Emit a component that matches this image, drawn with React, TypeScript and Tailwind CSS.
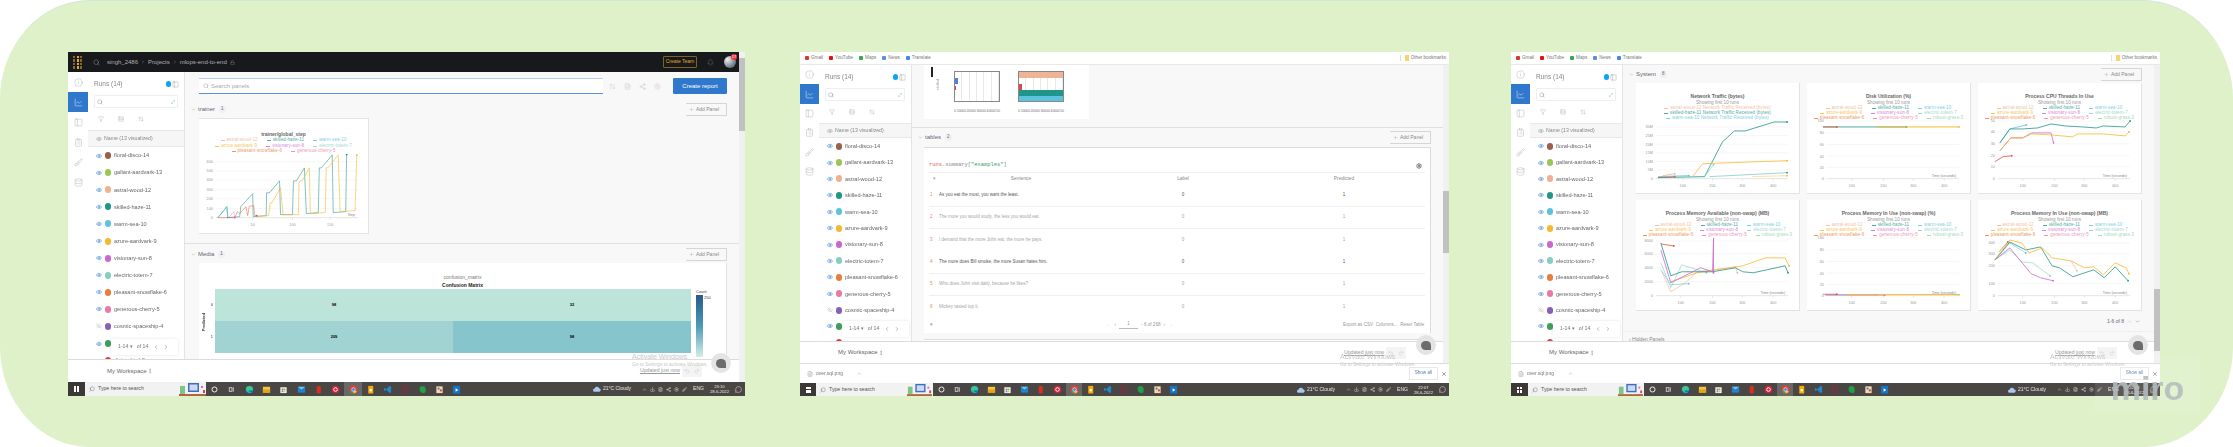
import {
  ArrowUpDown,
  Bell,
  Brush,
  ChevronDown,
  ChevronLeft,
  ChevronRight,
  ChevronUp,
  ClipboardList,
  Database,
  Download,
  Eye,
  EyeOff,
  FileText,
  Filter,
  Info,
  LineChart,
  Lock,
  Maximize2,
  MessageCircle,
  MoreVertical,
  PanelLeft,
  Plus,
  Redo2,
  Rows3,
  Search,
  Settings,
  Share2,
  Undo2,
  X,
} from "lucide-react";
import type { ReactNode } from "react";

const runs = [
  { name: "floral-disco-14", color: "#9c5f4a" },
  { name: "gallant-aardvark-13", color: "#9bc653" },
  { name: "astral-wood-12", color: "#f0b092" },
  { name: "skilled-haze-11", color: "#20958a" },
  { name: "warm-sea-10", color: "#5bc4dc" },
  { name: "azure-aardvark-9", color: "#f5b82e" },
  { name: "visionary-sun-8", color: "#cc66cc" },
  { name: "electric-totem-7", color: "#86cfc0" },
  { name: "pleasant-snowflake-6", color: "#e87d3e" },
  { name: "generous-cherry-5", color: "#ec79a4" },
  { name: "cosmic-spaceship-4", color: "#8560b8", hidden: true },
  { name: "robust-grass-3", color: "#3f9e5f" },
  { name: "divine-bird-2", color: "#d94040" },
];

const TEAL = "#20958a";
const YEL = "#f5b82e";
const PUR = "#cc66cc";
const MINT = "#86cfc0";
const BLUE = "#5bc4dc";
const PEACH = "#f0b092";
const RED = "#e0503c";

type Legend = [string, string][][];
type Series = { c: string; p: string; w?: number; o?: number };
type Tick = [number, string];

const runLegend: Legend = [
  [["astral-wood-12", PEACH], ["skilled-haze-11", TEAL], ["warm-sea-10", BLUE]],
  [["azure-aardvark-9", YEL], ["visionary-sun-8", PUR], ["electric-totem-7", MINT]],
  [["pleasant-snowflake-6", "#e87d3e"], ["generous-cherry-5", "#ec79a4"], ["robust-grass-3", "#8fcfa5"]],
];

const pctY: Tick[] = [[2, "100"], [14, "80"], [25.7, "60"], [37.3, "40"], [48.7, "20"], [60, "0"]];
const timeX: Tick[] = [[45, "100"], [77, "200"], [107, "300"], [138, "400"]];

const Plot = ({
  yTicks,
  xTicks,
  series,
  note,
  height = 75,
  width = 164,
  left = 20,
  right = 153,
}: {
  yTicks: Tick[];
  xTicks: Tick[];
  series: Series[];
  note?: string;
  height?: number;
  width?: number;
  left?: number;
  right?: number;
}) => {
  const base = yTicks[yTicks.length - 1][0];
  return (
    <svg viewBox={`0 0 ${width} ${height}`} className="block w-full">
      {yTicks.map(([y, label]) => (
        <g key={label}>
          <line x1={left} x2={right} y1={y} y2={y} stroke="#f0f0f0" strokeWidth="0.6" />
          <text x={left - 3} y={y + 1.5} fontSize="3.8" fill="#999" textAnchor="end">
            {label}
          </text>
        </g>
      ))}
      {xTicks.map(([x, label]) => (
        <g key={label}>
          <line x1={x} x2={x} y1={base} y2={base + 2} stroke="#ccc" strokeWidth="0.5" />
          <text x={x} y={base + 8} fontSize="3.8" fill="#999" textAnchor="middle">
            {label}
          </text>
        </g>
      ))}
      <line x1={left} x2={right} y1={base} y2={base} stroke="#d8d8d8" strokeWidth="0.5" />
      {series.map((s, i) => {
        const pts = s.p.split(" ");
        const [lx, ly] = pts[pts.length - 1].split(",");
        return (
          <g key={i}>
            <polyline points={s.p} fill="none" stroke={s.c} strokeWidth={s.w ?? 0.8} opacity={s.o ?? 1} />
            <circle cx={lx} cy={ly} r="0.9" fill={s.c} />
          </g>
        );
      })}
      {note && (
        <text x={right - 3} y={base - 2} fontSize="3.6" fill="#888" textAnchor="end">
          {note}
        </text>
      )}
    </svg>
  );
};

const ChartCard = ({
  title,
  sub,
  legend,
  children,
  className = "h-[111px] pt-[10px]",
  legendBox = "h-[13px]",
  rowBox = "h-[5px]",
}: {
  title: string;
  sub?: string;
  legend: Legend;
  children: ReactNode;
  className?: string;
  legendBox?: string;
  rowBox?: string;
}) => (
  <div className={`bg-white border-b border-r border-[#e3e3e3] overflow-hidden flex flex-col items-center ${className}`}>
    <div className="text-[5px] leading-[6px] font-bold text-[#666] whitespace-nowrap">{title}</div>
    {sub && <div className="text-[4.6px] leading-[7px] text-[#999] whitespace-nowrap">{sub}</div>}
    <div className={`flex flex-col items-center shrink-0 opacity-80 ${legendBox}`}>
      {legend.map((row, i) => (
        <div key={i} className={`flex gap-[9px] items-center shrink-0 ${rowBox}`}>
          {row.map(([name, color]) => (
            <span key={name} className="flex items-center gap-[2px] text-[4.5px] tracking-[0.1px] whitespace-nowrap" style={{ color }}>
              <span className="w-[4px] h-[1px]" style={{ background: color }} />
              {name}
            </span>
          ))}
        </div>
      ))}
    </div>
    <div className="w-full">{children}</div>
  </div>
);

const RunsSidebar = ({ width, rowH, nameH }: { width: string; rowH: string; nameH: string }) => (
  <div className={`relative shrink-0 bg-white border-r border-[#e4e4e4] overflow-hidden ${width}`}>
    <div className="flex items-center justify-between h-[23px] pl-[6px] pr-[5px] pt-[1px] text-[6.5px] text-[#888]">
      <span>Runs (14)</span>
      <span className="flex items-center gap-[1px]">
        <span className="w-[5px] h-[6px] rounded-full bg-[#0aa5f5]" />
        <PanelLeft className="w-[7px] h-[7px] text-[#888]" strokeWidth={1.2} />
      </span>
    </div>
    <div className="flex items-center justify-between h-[13px] mx-[6px] border border-[#eee] rounded-[1px] px-[2px]">
      <Search className="w-[6px] h-[6px] text-[#777]" strokeWidth={1.5} />
      <Maximize2 className="w-[4px] h-[4px] text-[#2aa5c8]" strokeWidth={1.5} />
    </div>
    <div className="flex items-center gap-[14px] h-[22px] pl-[10px] text-[#999]">
      <Filter className="w-[6px] h-[6px]" strokeWidth={1.3} />
      <Rows3 className="w-[6px] h-[6px]" strokeWidth={1.3} />
      <ArrowUpDown className="w-[6px] h-[6px]" strokeWidth={1.3} />
    </div>
    <div className={`flex items-center gap-[2px] pl-[8px] bg-[#f6f6f6] border-y border-[#e8e8e8] text-[5.2px] text-[#888] whitespace-nowrap ${nameH}`}>
      <Eye className="w-[6px] h-[6px] text-[#777]" strokeWidth={1.4} />
      Name (13 visualized)
    </div>
    {runs.map((r) => (
      <div key={r.name} className={`flex items-center pl-[8px] text-[5.6px] text-[#666] whitespace-nowrap ${rowH}`}>
        {r.hidden ? (
          <EyeOff className="w-[6px] h-[6px] text-[#aaa] shrink-0" strokeWidth={1.4} />
        ) : (
          <Eye className="w-[6px] h-[6px] text-[#2f78cc] shrink-0" strokeWidth={2} />
        )}
        <span className="w-[6px] h-[7px] rounded-full ml-[3px] mr-[3px] shrink-0" style={{ background: r.color }} />
        {r.name}
      </div>
    ))}
    <div className="absolute left-[23px] bottom-[4px] flex items-center gap-[4px] h-[16px] w-[67px] pl-[7px] bg-white rounded-[2px] shadow-[0_0_3px_rgba(0,0,0,0.12)] text-[5.2px] text-[#777]">
      <span>1-14 ▾</span>
      <span>of 14</span>
      <ChevronLeft className="w-[6px] h-[6px] ml-[1px]" />
      <ChevronRight className="w-[6px] h-[6px]" />
    </div>
  </div>
);

const NavRail = ({ width, item }: { width: string; item: string }) => {
  const icons = [Info, LineChart, PanelLeft, ClipboardList, Brush, Database];
  return (
    <div className={`shrink-0 bg-white flex flex-col ${width}`}>
      {icons.map((Icon, i) => (
        <div key={i} className={`flex items-center justify-center ${item} ${i === 1 ? "bg-[#2f78cc] text-white" : "text-[#b0b0b0]"}`}>
          <Icon className="w-[9px] h-[9px]" strokeWidth={1.2} />
        </div>
      ))}
    </div>
  );
};

const SectionHead = ({ title, count, className = "" }: { title: string; count: number; className?: string }) => (
  <div className={`flex items-center justify-between h-[13px] pl-[6px] ${className}`}>
    <div className="flex items-center gap-[2px] text-[6px] text-[#667]">
      <ChevronDown className="w-[5px] h-[5px] text-[#999]" />
      {title}
      <span className="ml-[2px] px-[2px] rounded-[3px] bg-[#eef0f2] text-[4.5px] text-[#667]">{count}</span>
    </div>
    <div className="flex items-center gap-[2px] h-full w-[41px] pl-[3px] border border-l-0 border-[#d5d5d5] rounded-[1px] text-[5px] text-[#888]">
      <Plus className="w-[5px] h-[5px] text-[#888]" strokeWidth={1.2} />
      Add Panel
    </div>
  </div>
);

const TaskIcon = ({ kind }: { kind: number }) => {
  const shapes = [
    <circle key="c" cx="5" cy="5" r="2.8" fill="none" stroke="#fff" strokeWidth="1" />,
    <g key="t" fill="none" stroke="#ddd" strokeWidth="0.9">
      <rect x="2.5" y="3" width="3" height="4" />
      <path d="M7 2.5v5" />
    </g>,
    <g key="e">
      <circle cx="5" cy="5" r="4.3" fill="#1572c4" />
      <path d="M1 5a4 4 0 0 1 8 0c0 1-1 1-2 1H4c0 1.5 2 2.5 4 1.5A4.3 4.3 0 0 1 1 5z" fill="#3cc98a" />
    </g>,
    <g key="f">
      <rect x="1" y="2" width="8" height="6.5" fill="#f5c542" />
      <rect x="1" y="5" width="8" height="3.5" fill="#e3a21a" />
    </g>,
    <g key="s">
      <rect x="1.5" y="2.5" width="7" height="6.5" fill="#f4f4f4" />
      <rect x="3" y="4" width="1.8" height="1.8" fill="#e8563a" />
      <rect x="5.2" y="4" width="1.8" height="1.8" fill="#6cb83a" />
      <rect x="3" y="6.2" width="1.8" height="1.8" fill="#2f9be8" />
      <rect x="5.2" y="6.2" width="1.8" height="1.8" fill="#f5c542" />
    </g>,
    <g key="m">
      <rect x="1" y="2" width="8" height="6.5" fill="#1a86d0" />
      <path d="M1 2l4 3 4-3" fill="#7cc4f0" />
    </g>,
    <rect key="o" x="3" y="1" width="4.5" height="8.5" rx="1.5" fill="#d8321e" />,
    <g key="r">
      <circle cx="5" cy="5" r="4.2" fill="#d8233a" />
      <circle cx="5" cy="5" r="2" fill="none" stroke="#fff" strokeWidth="1" />
    </g>,
    <g key="ch">
      <circle cx="5" cy="5" r="4.4" fill="#e34133" />
      <path d="M5 5L1.2 7.2A4.4 4.4 0 0 0 5 9.4z" fill="#3aa757" />
      <path d="M5 5l3.8 2.2A4.4 4.4 0 0 1 5 9.4z" fill="#fbc02d" />
      <circle cx="5" cy="5" r="2" fill="#4285f4" stroke="#fff" strokeWidth="0.6" />
    </g>,
    <g key="y">
      <rect x="2.5" y="1" width="5.5" height="8.5" fill="#f9ab00" />
      <rect x="4" y="4.5" width="2.5" height="2.5" fill="#fff" />
    </g>,
    <path key="v" d="M7.5 1L3.5 4.8 1.5 3.3 1 3.7v2.6l.5.4 2-1.5 4 3.8 1.5-.7V1.7z" fill="#1f8ad2" />,
    <rect key="op" x="2.5" y="1" width="5" height="8.5" rx="2.5" fill="none" stroke="#b01e3a" strokeWidth="1" />,
    <path key="ev" d="M3 1.5h4l1.5 2.5v3C8.5 9 6 9.5 4.5 8.5 2 8 1.5 5 2 3z" fill="#1fa14a" />,
    <g key="p">
      <rect x="1.5" y="1.5" width="7" height="7.5" fill="#f1d9b0" />
      <circle cx="4" cy="4" r="1.2" fill="#3b82d6" />
      <circle cx="6.5" cy="6" r="1.2" fill="#d6483b" />
    </g>,
    <g key="b">
      <rect x="1" y="1" width="8" height="8.5" fill="#1476c8" />
      <path d="M4 3.5l3 2-3 2z" fill="#fff" />
    </g>,
  ];
  return (
    <svg viewBox="0 0 10 10" className="w-[9px] h-[9px]">
      {shapes[kind]}
    </svg>
  );
};

const Taskbar = ({
  start,
  searchW,
  cell,
  time,
  date,
}: {
  start: string;
  searchW: string;
  cell: string;
  time: string;
  date: string;
}) => (
  <div className="flex items-center h-full bg-[#4a4643]">
    <div className={`h-full flex items-center justify-center bg-[#3b3836] ${start}`}>
      <div className="grid grid-cols-2 gap-[0.6px] w-[5px] h-[6px]">
        <span className="bg-white" />
        <span className="bg-white" />
        <span className="bg-white" />
        <span className="bg-white" />
      </div>
    </div>
    <div className={`h-full flex items-center gap-[3px] pl-[4px] bg-[#f2f2f2] text-[5.2px] text-[#555] whitespace-nowrap ${searchW}`}>
      <Search className="w-[6px] h-[6px] -scale-x-100" strokeWidth={1.5} />
      Type here to search
    </div>
    <svg viewBox="0 0 27 14" className="w-[27px] h-full shrink-0 bg-[#f2f2f2]">
      <rect x="0" y="12" width="27" height="2" fill="#b5653a" />
      <rect x="1" y="4" width="5" height="8" fill="#7cc48a" />
      <rect x="9" y="1" width="11" height="9" fill="#3a6fc4" />
      <rect x="10.5" y="2.5" width="8" height="6" fill="#cfd8ef" />
      <rect x="22" y="4" width="2" height="2" fill="#e06aa8" />
      <rect x="24" y="8" width="2" height="3" fill="#d04060" />
    </svg>
    {Array.from({ length: 15 }, (_, i) => (
      <div key={i} className={`h-full flex items-center justify-center shrink-0 ${cell} ${i === 8 ? "bg-[#6b6764]" : ""}`}>
        <TaskIcon kind={i} />
      </div>
    ))}
    <div className="flex-1" />
    <div className="flex items-center h-full text-[5px] text-[#e8e8e8] whitespace-nowrap">
      <svg viewBox="0 0 10 7" className="w-[8px] h-[6px] mr-[2px]">
        <path d="M2 7a2 2 0 0 1 0-4 3 3 0 0 1 5.6-.5A2.3 2.3 0 0 1 8 7z" fill="#a8c8ec" />
      </svg>
      <span className="mr-[11px]">21°C Cloudy</span>
      <ChevronUp className="w-[5px] h-[5px] mr-[3px]" />
      <span className="flex items-center gap-[3px] mr-[6px] text-[#ddd]">
        <Download className="w-[5px] h-[5px]" />
        <FileText className="w-[5px] h-[5px]" />
        <Share2 className="w-[5px] h-[5px]" />
        <Settings className="w-[5px] h-[5px]" />
        <Brush className="w-[5px] h-[5px]" />
      </span>
      <span className="mr-[6px]">ENG</span>
      <span className="flex flex-col items-center mr-[6px] text-[4.2px] leading-[5px]">
        <span>{time}</span>
        <span>{date}</span>
      </span>
      <MessageCircle className="w-[7px] h-[7px] mr-[3px] text-white" strokeWidth={1.5} />
    </div>
  </div>
);

const BookmarkBar = () => {
  const items: [string, string][] = [
    ["Gmail", "#d8392b"],
    ["YouTube", "#e60f0f"],
    ["Maps", "#34a853"],
    ["News", "#5b8fe0"],
    ["Translate", "#4285f4"],
  ];
  return (
    <div className="flex items-center h-[13px] pl-[5px] pr-[3px] bg-white border-b border-[#e8e8e8] text-[4.6px] text-[#777] whitespace-nowrap">
      {items.map(([name, color]) => (
        <span key={name} className="flex items-center gap-[2px] mr-[6px]">
          <span className="w-[4px] h-[4px] rounded-[1px]" style={{ background: color }} />
          {name}
        </span>
      ))}
      <span className="flex-1" />
      <span className="flex items-center gap-[2px] border-l border-[#ddd] pl-[4px]">
        <span className="w-[4px] h-[6px] bg-[#f7d56a]" />
        Other bookmarks
      </span>
    </div>
  );
};

const DownloadBar = () => (
  <div className="flex items-center h-[20px] pl-[7px] pr-[2px] bg-white border-t border-[#ddd] text-[5px] text-[#777]">
    <FileText className="w-[6px] h-[6px] text-[#888] mr-[3px]" strokeWidth={1.5} />
    over.sql.png
    <ChevronUp className="w-[5px] h-[5px] ml-[14px] text-[#888]" />
    <span className="flex-1" />
    <span className="border border-[#e8e8e8] px-[5px] py-[2px] text-[4.6px] text-[#5b7fb8]">Show all</span>
    <X className="w-[6px] h-[6px] ml-[3px] text-[#444]" />
  </div>
);

const WorkspaceBar = ({ height, offset }: { height: string; offset: string }) => (
  <div className={`shrink-0 flex items-center bg-white border-t border-[#dcdcdc] text-[#666] ${height} ${offset}`}>
    <span className="text-[6px]">My Workspace</span>
    <MoreVertical className="w-[6px] h-[6px]" strokeWidth={1.5} />
    <span className="flex-1" />
    <span className="text-[5.2px] text-[#999] underline">Updated just now</span>
    <span className="flex items-center gap-[4px] ml-[2px] mr-[37px] h-[12px] px-[2px] bg-[#f4f4f4] text-[#bbb]">
      <Undo2 className="w-[6px] h-[6px]" strokeWidth={1.3} />
      <Redo2 className="w-[6px] h-[6px]" strokeWidth={1.3} />
    </span>
  </div>
);

const Chat = ({ className }: { className: string }) => (
  <div className={`absolute w-[20px] h-[20px] rounded-full bg-[#e4e4e4] flex items-center justify-center ${className}`}>
    <span className="w-[10px] h-[9px] rounded-[5px] rounded-br-none bg-[#6c6c6c]" />
  </div>
);

const Activate = ({ className }: { className: string }) => (
  <div className={`absolute text-[#c8c8c8] whitespace-nowrap ${className}`}>
    <div className="text-[7px] leading-[7px]">Activate Windows</div>
    <div className="text-[4.8px] leading-[9px]">Go to Settings to activate Windows.</div>
  </div>
);

const Scrollbar = ({ thumb }: { thumb: string }) => (
  <div className="shrink-0 w-[6px] bg-[#f1f1f1]">
    <div className={thumb} />
  </div>
);

/* --------- panel 1: trainer + media --------- */
const sawTeal =
  "19,64 28,53 29,64 41,63 42,53 54,40 54.5,63 67.6,62 68,39 71,39 81,27 82,61 94,61 95,27 98,27 106,14 108,60 120,59 121,14 123,14 134,1 135,59 147.6,58 148.5,0.5";
const sawYel =
  "58,62.7 70,62 71.5,49 73.4,49 82,34 84.6,61 100,61 100.6,28 104,26.5 111,14 112,60 127,59 128,14 130.6,13 140,1 142,58 157,57 158.7,1";
const sawRed = "19,64 36,64 38.5,58 41,60 47,53 49,62 50.6,52.6 55,52 56,62 58,62";

const Panel1 = () => (
  <div className="relative w-[677px] h-[344px] shrink-0 flex flex-col blur-[0.4px]">
    <div className="flex h-[330px]">
      <div className="flex-1 min-w-0 flex flex-col">
        <div className="flex items-center h-[20px] shrink-0 bg-[#18191d] text-[6px] text-[#b0b0b0] pl-[5px] pr-[3px]">
          <div className="grid grid-cols-3 gap-x-[1.5px] gap-y-[1px] w-[9px] h-[13px] mr-[11px]">
            {Array.from({ length: 12 }, (_, i) => (
              <span key={i} className={i % 3 === 1 ? "bg-[#e0a82e]" : "bg-[#8a6a20]"} />
            ))}
          </div>
          <Search className="w-[7px] h-[7px] mr-[7px]" strokeWidth={1.3} />
          <span>singh_2486</span>
          <ChevronRight className="w-[4px] h-[4px] mx-[3px]" />
          <span>Projects</span>
          <ChevronRight className="w-[4px] h-[4px] mx-[3px]" />
          <span>mlops-end-to-end</span>
          <Lock className="w-[5px] h-[5px] ml-[3px]" strokeWidth={1.3} />
          <span className="flex-1" />
          <span className="flex items-center justify-center w-[34px] h-[12px] border border-[#7a6420] rounded-[1px] text-[5px] text-[#e0a82e] mr-[10px]">
            Create Team
          </span>
          <Bell className="w-[7px] h-[7px] text-[#888] mr-[10px]" strokeWidth={1.2} />
          <span className="relative w-[12px] h-[12px] rounded-full bg-[radial-gradient(circle_at_30%_30%,#f0f0f0,#345)]">
            <span className="absolute -top-[2px] -right-[1px] w-[6px] h-[6px] rounded-full bg-[#f03040] text-[4px] leading-[6px] text-center text-white">
              17
            </span>
          </span>
        </div>
        <div className="flex flex-1 min-h-0">
          <NavRail width="w-[20px]" item="h-[20px]" />
          <RunsSidebar width="w-[97px]" rowH="h-[17.1px]" nameH="h-[17px]" />
          <div className="flex-1 min-w-0 bg-[#f8f8f8] overflow-hidden">
            <div className="flex items-center h-[16px] mt-[6px] ml-[14px] mr-[12px]">
              <div className="flex items-center gap-[2px] w-[404px] h-full pl-[4px] bg-white border-t border-b border-t-[#b9cfe8] border-b-[#5a93d8] text-[6px] text-[#aaa]">
                <Search className="w-[6px] h-[6px] text-[#888]" strokeWidth={1.5} />
                Search panels
              </div>
              <div className="flex items-center gap-[8px] ml-[6px] text-[#bbb]">
                <ArrowUpDown className="w-[7px] h-[7px]" strokeWidth={1.2} />
                <FileText className="w-[7px] h-[7px]" strokeWidth={1.2} />
                <Share2 className="w-[7px] h-[7px]" strokeWidth={1.2} />
                <Settings className="w-[7px] h-[7px]" strokeWidth={1.2} />
              </div>
              <span className="flex-1" />
              <div className="flex items-center justify-center w-[54px] h-full rounded-[1px] bg-[#2f78cc] text-[6px] text-white">
                Create report
              </div>
            </div>
            <SectionHead title="trainer" count={1} className="mt-[9px] mr-[12px]" />
            <div className="ml-[14px] mt-[2px] w-[170px]">
              <ChartCard
                title="trainer/global_step"
                legend={runLegend.slice(0, 2).concat([runLegend[2].slice(0, 2)])}
                className="h-[116px] border-t border-[#e3e3e3] pt-[12px]"
                legendBox="h-[17px] pt-[1px]"
                rowBox="h-[5.5px]"
              >
                <Plot
                  height={78}
                  width={170}
                  left={17}
                  right={160}
                  yTicks={[[7.7, "600"], [17, "500"], [26, "400"], [36, "300"], [45, "200"], [55, "100"], [64, "0"]]}
                  xTicks={[[54, "50"], [94, "100"], [132, "150"]]}
                  note="Step"
                  series={[
                    { c: TEAL, p: sawTeal, w: 0.7, o: 0.8 },
                    { c: YEL, p: sawYel, w: 0.7, o: 0.85 },
                    { c: BLUE, p: "19,64 28,53 29,64", w: 0.7 },
                    { c: RED, p: sawRed, w: 0.6, o: 0.8 },
                    { c: PUR, p: "30,64 35,58 36,64", w: 0.5, o: 0.7 },
                  ]}
                />
              </ChartCard>
            </div>
            <div className="h-[10px] border-b border-[#e0e0e0]" />
            <SectionHead title="Media" count={1} className="mt-[4px] mr-[12px]" />
            <div className="ml-[14px] mr-[12px] mt-[2px] h-[120px] bg-white border-r border-[#e3e3e3] flex flex-col items-center pt-[10px]">
              <div className="text-[5px] leading-[8px] text-[#777]">confusion_matrix</div>
              <div className="text-[5px] leading-[8px] font-bold text-[#222]">Confusion Matrix</div>
              <div className="flex w-full">
                <div className="flex w-[16px] flex-col items-end justify-center h-[64px] relative text-[4px] text-[#333]">
                  <span className="absolute right-[8px] top-[24px] [writing-mode:vertical-rl] rotate-180 font-bold">Predicted</span>
                  <span className="absolute right-[2px] top-[13px]">0</span>
                  <span className="absolute right-[2px] top-[45px]">1</span>
                </div>
                <div className="grid grid-cols-2 grid-rows-2 w-[476px] h-[64px] text-[4px] font-bold text-black">
                  <div className="flex items-center justify-center bg-[#bde4d9]">98</div>
                  <div className="flex items-center justify-center bg-[#bde4d9]">32</div>
                  <div className="flex items-center justify-center bg-[#a0d3d2]">209</div>
                  <div className="flex items-center justify-center bg-[#86c5cc]">98</div>
                </div>
                <div className="ml-[5px] flex flex-col text-[4px] text-[#444]">
                  <span className="h-[6px] leading-[6px]">Count</span>
                  <div className="flex">
                    <div className="w-[7px] h-[62px] bg-gradient-to-b from-[#2b5a8c] via-[#4a9ab8] to-[#d3eee4]" />
                    <span className="ml-[1px]">250</span>
                  </div>
                </div>
              </div>
            </div>
          </div>
        </div>
        <WorkspaceBar height="h-[23px]" offset="pl-[39px]" />
      </div>
      <Scrollbar thumb="w-full h-[73px] mt-[6px] bg-[#c1c1c1]" />
    </div>
    <div className="h-[14px]">
      <Taskbar start="w-[17px] shrink-0" searchW="w-[94px] shrink-0" cell="w-[17.3px]" time="23:10" date="28-6-2022" />
    </div>
    <Activate className="left-[564px] top-[301px]" />
    <Chat className="left-[643px] top-[301px]" />
  </div>
);

/* --------- panel 2: tables --------- */
const tableRows = [
  { text: "As you eat the most, you want the least.", dark: true },
  { text: "The more you would study, the less you would eat.", line: true },
  { text: "I demand that the more John eat, the more he pays.", line: false },
  { text: "The more does Bill smoke, the more Susan hates him.", dark: true },
  { text: "Who does John visit daily, because he likes?", line: true },
  { text: "Mickey tasted top it.", line: false },
];

const MiniBars = ({ bands }: { bands: boolean }) => (
  <div className="relative w-[46px] h-[31px] border border-[#888] bg-white grid grid-cols-6 overflow-hidden">
    {Array.from({ length: 6 }, (_, i) => (
      <span key={i} className="border-r border-[#e8e8e8]" />
    ))}
    {bands ? (
      <>
        <span className="absolute left-0 right-0 top-0 h-[6px] bg-[#efb395]" />
        <span className="absolute left-0 w-[3px] top-[12px] h-[6px] bg-[#e04848]" />
        <span className="absolute left-0 right-0 top-[18px] h-[6px] bg-[#20958a]" />
        <span className="absolute left-0 right-0 top-[24px] h-[7px] bg-[#5bc4dc]" />
      </>
    ) : (
      <>
        <span className="absolute left-0 w-[3px] top-[6px] h-[6px] bg-[#4a80e0]" />
        <span className="absolute left-0 w-[1px] top-[14px] h-[4px] bg-[#e04848]" />
      </>
    )}
  </div>
);

const Panel2 = () => (
  <div className="relative w-[649px] h-[344px] shrink-0 ml-[55px] flex flex-col blur-[0.4px]">
    <BookmarkBar />
    <div className="flex h-[298px]">
      <div className="flex-1 min-w-0 flex flex-col">
        <div className="flex h-[276px]">
          <NavRail width="w-[19px]" item="h-[19.4px]" />
          <RunsSidebar width="w-[93px]" rowH="h-[16.4px]" nameH="h-[15px]" />
          <div className="flex-1 min-w-0 bg-[#f8f8f8] overflow-hidden">
            <div className="ml-[12px] w-[165px] h-[54px] bg-white flex pl-[30px] pt-[6px] gap-[18px] relative">
              <span className="absolute left-[7px] top-[2px] w-[2px] h-[10px] bg-[#222]" />
              <span className="absolute left-[11px] top-[14px] [writing-mode:vertical-rl] rotate-180 text-[4px] text-[#999]">skilled</span>
              <div className="flex flex-col">
                <MiniBars bands={false} />
                <span className="mt-[7px] text-[3.6px] text-[#777] tracking-tighter whitespace-nowrap">0 10000 20000 30000 40000 50</span>
              </div>
              <div className="flex flex-col">
                <MiniBars bands />
                <span className="mt-[7px] text-[3.6px] text-[#777] tracking-tighter whitespace-nowrap">0 10000 20000 30000 40000 50</span>
              </div>
            </div>
            <div className="h-[9px] border-b border-[#e0e0e0]" />
            <SectionHead title="tables" count={2} className="mt-[3px] mr-[12px]" />
            <div className="ml-[12px] mr-[12px] mt-[3px] h-[186px] bg-white border-t border-r border-[#dcdcdc] px-[5px] flex flex-col">
              <div className="flex items-center justify-between h-[25px] pt-[11px] border-b border-[#f0f0f0] pr-[3px]">
                <span className="[font-family:'Liberation_Mono',monospace] text-[5.4px] text-[#888]">
                  <span className="text-[#d0604a]">runs</span>.summary[<span className="text-[#2f9a5f]">"examples"</span>]
                </span>
                <Settings className="w-[6px] h-[6px] text-[#444]" strokeWidth={2.5} />
              </div>
              <div className="grid grid-cols-[10px_164px_160px_1fr] items-center h-[12px] text-[4.8px] text-[#888] text-center">
                <span className="text-[#aaa]">▾</span>
                <span>Sentence</span>
                <span>Label</span>
                <span>Predicted</span>
              </div>
              {tableRows.map((r, i) => (
                <div
                  key={i}
                  className={`grid grid-cols-[10px_164px_160px_1fr] items-center h-[22.2px] shrink-0 text-[4.5px] ${r.line || r.dark ? "border-b border-[#efefef]" : ""} ${r.dark ? "text-[#555]" : "text-[#a5a5a5]"}`}
                >
                  <span className="text-[#e08a70] pl-[1px]">{i + 1}</span>
                  <span className="whitespace-nowrap">{r.text}</span>
                  <span className="text-center">0</span>
                  <span className="text-center">1</span>
                </div>
              ))}
              <div className="flex items-center h-[14px] text-[4.6px] text-[#999]">
                <span className="w-[178px] pl-[1px]">▾</span>
                <span className="flex items-center gap-[3px] w-[236px]">
                  <span>←</span>
                  <span>‹</span>
                  <span className="w-[19px] border-b border-[#bbb] text-center">1</span>
                  <span>- 6 of 268</span>
                  <span>›</span>
                  <span>→</span>
                </span>
                <span className="whitespace-nowrap">Export as CSV&nbsp; Columns...&nbsp; Reset Table</span>
              </div>
            </div>
            <div className="ml-[12px] mr-[12px] mt-[6px] h-[10px] bg-white border-t border-[#dcdcdc]" />
          </div>
        </div>
        <WorkspaceBar height="h-[22px]" offset="pl-[38px]" />
      </div>
      <Scrollbar thumb="w-full h-[62px] mt-[126px] bg-[#c1c1c1]" />
    </div>
    <DownloadBar />
    <div className="h-[13px]">
      <Taskbar start="w-[16px] shrink-0" searchW="w-[90px] shrink-0" cell="w-[16.6px]" time="22:07" date="28-6-2022" />
    </div>
    <Activate className="left-[540px] top-[301px]" />
    <Chat className="left-[616px] top-[283px]" />
  </div>
);

/* --------- panel 3: system --------- */
const netLegend: Legend = [
  [["astral-wood-12 Network Traffic Received (bytes)", PEACH]],
  [["skilled-haze-11 Network Traffic Received (bytes)", TEAL]],
  [["warm-sea-10 Network Traffic Received (bytes)", BLUE]],
];

const charts: { title: string; sub: string; legend: Legend; plot: ReactNode }[] = [
  {
    title: "Network Traffic (bytes)",
    sub: "Showing first 10 runs",
    legend: netLegend,
    plot: (
      <Plot
        yTicks={[[8, "30M"], [16.7, "25M"], [25.3, "20M"], [34, "15M"], [42.7, "10M"], [51.3, "5M"], [60, "0"]]}
        xTicks={[[47, "100"], [77, "200"], [107, "300"], [138, "400"]]}
        series={[
          { c: TEAL, p: "22,59 69,58 87,23 99,12 110,12 139,3 152,3" },
          { c: YEL, p: "57,58 67,45 121,43 152,42" },
          { c: BLUE, p: "22,58 53,57" },
          { c: PEACH, p: "27,57 39,55" },
          { c: TEAL, p: "74,58 152,54", w: 0.6, o: 0.7 },
          { c: YEL, p: "117,58 152,57", w: 0.6, o: 0.7 },
          { c: MINT, p: "69,58 78,46", w: 0.6 },
          { c: RED, p: "22,59 39,58", w: 0.6 },
        ]}
      />
    ),
  },
  {
    title: "Disk Utilization (%)",
    sub: "Showing first 10 runs",
    legend: runLegend,
    plot: (
      <Plot
        yTicks={pctY}
        xTicks={timeX}
        note="Time (seconds)"
        series={[
          { c: TEAL, p: "16,8 100,8" },
          { c: YEL, p: "70,8 153,8", w: 1 },
          { c: RED, p: "16,8 30,8" },
        ]}
      />
    ),
  },
  {
    title: "Process CPU Threads In Use",
    sub: "Showing first 10 runs",
    legend: runLegend,
    plot: (
      <Plot
        yTicks={[[2, "50"], [13, "40"], [25, "30"], [37, "20"], [48, "10"], [60, "0"]]}
        xTicks={timeX}
        note="Time (seconds)"
        series={[
          { c: BLUE, p: "22,24 32,10 48.6,6" },
          { c: TEAL, p: "22,24 32,10 45,10 60,9 73.5,5 88,7 105,8 119,9 126,7 148,8 153,2" },
          { c: PUR, p: "22,32 33,19 45,19 54,14 73.5,14 76,24" },
          { c: YEL, p: "22,32 33,19 45,19 54,15 73.5,16 95,18 100,15 126,15 148,17 152,13" },
          { c: RED, p: "17,43 25,38 34,37" },
        ]}
      />
    ),
  },
  {
    title: "Process Memory Available (non-swap) (MB)",
    sub: "Showing first 10 runs",
    legend: runLegend,
    plot: (
      <Plot
        yTicks={[[5, "8000"], [18, "6000"], [32, "4000"], [46, "2000"], [60, "0"]]}
        xTicks={timeX}
        note="Time (seconds)"
        series={[
          { c: PEACH, p: "26,36 35,56 50,47 61.5,36 100,31 102,37", w: 0.6 },
          { c: MINT, p: "25,27 35,52 46,29 71,37", w: 0.6 },
          { c: BLUE, p: "25,34 35,49 53,48", w: 0.6 },
          { c: YEL, p: "35,46 61.5,37 107.5,30 130,22 150,22 154,30" },
          { c: TEAL, p: "25,7 35,40 46,36 77,36 100,32 107.5,36 118,37 150,30 153,37" },
          { c: PUR, p: "25,14 35,47 65,32 77,36 78,2 78,37" },
          { c: RED, p: "25,8 38,10" },
        ]}
      />
    ),
  },
  {
    title: "Process Memory In Use (non-swap) (%)",
    sub: "Showing first 10 runs",
    legend: runLegend,
    plot: (
      <Plot
        yTicks={pctY}
        xTicks={timeX}
        note="Time (seconds)"
        series={[
          { c: MINT, p: "18,59 70,59", w: 1 },
          { c: PUR, p: "18,59.5 78,59.5", w: 0.6 },
          { c: YEL, p: "40,59 153,59", w: 1 },
          { c: RED, p: "16,58.5 30,58.5", w: 0.6 },
        ]}
      />
    ),
  },
  {
    title: "Process Memory In Use (non-swap) (MB)",
    sub: "Showing first 10 runs",
    legend: runLegend,
    plot: (
      <Plot
        yTicks={[[7, "400"], [18, "300"], [30, "200"], [48, "100"], [60, "0"]]}
        xTicks={timeX}
        note="Time (seconds)"
        series={[
          { c: MINT, p: "17,24 32,14 44,26 55,27 72.5,40", w: 0.6 },
          { c: BLUE, p: "17,24 32,7 48,17", w: 0.6 },
          { c: PUR, p: "17,24 32,12 53.5,38 63,42 75.5,45" },
          { c: TEAL, p: "17,24 32,6 48,14 63,11 74.5,30 82,32 95.5,41 116.5,34 127,42 138,31 151,45" },
          { c: YEL, p: "17,24 32,4 44,7 51.5,17 65,12 74.5,22 93.5,25 107,32 116.5,31 126,39 138,27 149,32 152,38" },
          { c: PEACH, p: "93.5,25 99.5,35", w: 0.6 },
          { c: RED, p: "21,16 30,6", w: 0.6 },
        ]}
      />
    ),
  },
];

const Panel3 = () => (
  <div className="relative w-[649px] h-[344px] shrink-0 ml-[62px] flex flex-col blur-[0.4px]">
    <BookmarkBar />
    <div className="flex h-[298px]">
      <div className="flex-1 min-w-0 flex flex-col">
        <div className="flex h-[276px]">
          <NavRail width="w-[19px]" item="h-[19.4px]" />
          <RunsSidebar width="w-[93px]" rowH="h-[16.4px]" nameH="h-[15px]" />
          <div className="flex-1 min-w-0 bg-[#f8f8f8] overflow-hidden">
            <SectionHead title="System" count={8} className="mt-[3px] mr-[12px]" />
            <div className="grid grid-cols-[164px_164px_164px] gap-x-[7px] gap-y-[6px] ml-[13px] mt-[2px]">
              {charts.map((c) => (
                <ChartCard key={c.title} title={c.title} sub={c.sub} legend={c.legend}>
                  {c.plot}
                </ChartCard>
              ))}
            </div>
            <div className="flex items-center justify-end gap-[3px] h-[11px] mt-[5px] pr-[14px] text-[5px] text-[#667]">
              1-6 of 8
              <ChevronUp className="w-[5px] h-[5px] text-[#bbb]" />
              <ChevronDown className="w-[5px] h-[5px] text-[#666]" />
            </div>
            <div className="h-[5px] border-b border-[#efefef]" />
            <div className="pl-[6px] mt-[4px] text-[5px] text-[#888]">› Hidden Panels</div>
          </div>
        </div>
        <WorkspaceBar height="h-[22px]" offset="pl-[38px]" />
      </div>
      <Scrollbar thumb="w-full h-[62px] mt-[224px] bg-[#c1c1c1]" />
    </div>
    <DownloadBar />
    <div className="h-[13px]">
      <Taskbar start="w-[17px] shrink-0" searchW="w-[89px] shrink-0" cell="w-[16.6px]" time="22:08" date="28-6-2022" />
    </div>
    <Activate className="left-[539px] top-[301px]" />
    <Chat className="left-[617px] top-[283px]" />
  </div>
);

export default function App() {
  return (
    <div className="w-[2233px] h-[447px] overflow-hidden bg-white [font-family:'Liberation_Sans',Arial,sans-serif]">
      <div className="relative flex w-full h-full pt-[51px] pl-[68px] rounded-[90px/100px] bg-[#def1c9] border-t border-[#cfe9d8]">
        <Panel1 />
        <Panel2 />
        <Panel3 />
        {/* miro watermark over the last panel */}
        <div className="absolute left-[2095px] top-[356px] w-[105px] h-[56px] bg-white/10 flex items-center justify-center">
          <span className="mt-[6px] text-[34px] font-bold leading-none text-[#b4bcbc] opacity-90">miro</span>
        </div>
      </div>
    </div>
  );
}
